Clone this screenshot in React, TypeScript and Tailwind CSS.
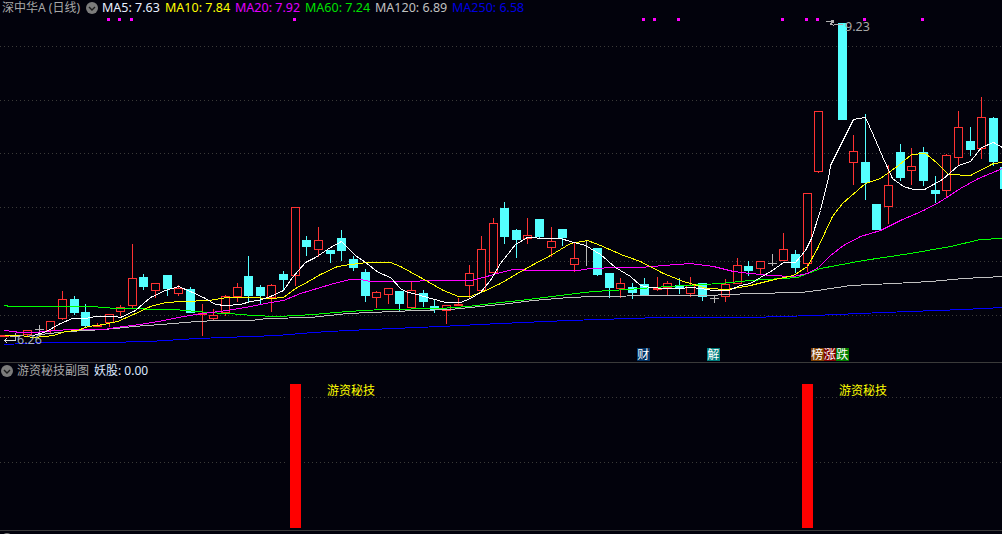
import React from 'react';

// left edge, wick top, body top, body bottom, wick bottom
type Candle = [number, number, number, number, number];

const redCandles: Candle[] = [
  [23, 330, 330, 335, 337], [46, 321, 321, 331, 333], [58, 291, 299, 319, 320], [93, 323, 325, 327, 327],
  [105, 314, 314, 323, 327], [116, 305, 307, 312, 316], [128, 244, 278, 306, 309], [151, 283, 283, 291, 298],
  [174, 285, 288, 294, 296], [198, 304, 313, 315, 336], [209, 309, 315, 319, 320], [221, 295, 296, 313, 316],
  [233, 283, 287, 297, 302], [267, 284, 285, 298, 312], [291, 207, 207, 276, 286], [314, 227, 240, 250, 257],
  [372, 291, 292, 298, 308], [384, 288, 288, 295, 304], [407, 281, 290, 308, 308], [442, 305, 305, 311, 324],
  [465, 265, 273, 286, 298], [477, 236, 249, 291, 293], [489, 218, 223, 273, 273], [523, 218, 235, 239, 244],
  [547, 227, 241, 248, 257], [570, 242, 258, 265, 272], [616, 278, 283, 289, 298], [653, 277, 288, 289, 291],
  [663, 281, 283, 288, 295], [686, 277, 285, 294, 297], [721, 279, 284, 297, 302], [733, 258, 265, 284, 284],
  [756, 261, 261, 269, 275], [779, 233, 249, 261, 261], [803, 193, 193, 264, 272], [814, 111, 111, 172, 173],
  [849, 135, 151, 163, 185], [884, 165, 185, 207, 224], [907, 148, 166, 171, 185], [942, 154, 155, 191, 198],
  [954, 111, 127, 158, 165], [977, 97, 117, 149, 159],
];

const cyanCandles: Candle[] = [
  [70, 296, 299, 313, 315], [81, 304, 312, 326, 328], [139, 274, 277, 287, 290], [163, 275, 275, 289, 296],
  [186, 287, 289, 313, 313], [244, 256, 276, 296, 302], [256, 285, 287, 296, 304], [279, 271, 274, 280, 290],
  [302, 236, 240, 247, 256], [326, 250, 250, 254, 263], [337, 230, 238, 251, 261], [349, 256, 259, 268, 271],
  [361, 269, 272, 296, 302], [395, 291, 291, 304, 311], [419, 290, 293, 302, 307], [430, 300, 306, 310, 313],
  [500, 202, 208, 237, 244], [512, 229, 230, 240, 258], [535, 219, 219, 237, 238], [558, 229, 229, 238, 246],
  [593, 248, 248, 275, 276], [605, 273, 273, 288, 298], [628, 283, 287, 293, 299], [640, 278, 284, 295, 295],
  [675, 278, 285, 288, 294], [698, 283, 283, 297, 301], [744, 261, 266, 271, 276], [791, 250, 254, 268, 273],
  [838, 23, 23, 120, 120], [861, 114, 162, 183, 200], [872, 204, 204, 230, 230], [896, 144, 152, 178, 181],
  [919, 147, 152, 181, 186], [931, 176, 190, 194, 203], [966, 127, 141, 150, 156], [989, 117, 118, 162, 166],
  [1000, 167, 167, 189, 189],
];

const maLines = [
  { color: '#0000ff', pts: '4,344 45,342 103,342 149,341 197,338 250,336 277,335 312,332 347,330 393,328 440,326 500,323 568,320 660,317 750,317 813,315 883,312 963,309 1002,307' },
  { color: '#c0c0c0', pts: '30,335 68,331 103,329 115,328 133,326 160,324 197,321 217,320 250,320 267,318 310,317 347,313 393,311 417,310 450,309 480,306 500,304 533,300 568,297 593,296 660,295 707,295 750,293 800,292 817,290 850,285 893,283 930,281 963,278 1002,276' },
  { color: '#00ff00', pts: '4,305 10,306 55,306 92,306 115,308 173,309 185,310 208,312 243,314 250,315 278,316 313,314 347,311 382,309 440,308 467,306 500,302 520,300 567,294 593,291 627,289 667,286 720,283 750,280 797,277 820,268 863,260 910,253 950,246 980,239 1002,238' },
  { color: '#ff00ff', pts: '4,330 20,332 33,332 45,331 68,329 103,329 123,326 140,324 163,320 183,316 203,313 227,310 250,306 270,302 283,300 300,293 320,287 337,282 350,279 360,279 370,281 393,281 407,281 433,280 470,280 483,277 500,272 513,269 533,270 557,270 577,270 590,268 617,267 640,267 663,265 690,263 713,266 733,271 750,273 770,275 793,276 807,273 818,267 830,255 843,245 860,236 880,230 900,220 923,210 940,201 960,188 978,178 1002,168' },
  { color: '#ffff00', pts: '4,335 20,335 33,337 45,336 53,335 65,331 77,330 88,326 103,324 117,321 133,314 150,306 165,302 183,301 208,300 227,297 250,297 270,298 283,297 295,288 308,281 320,274 337,266 350,264 367,262 390,262 400,266 420,277 443,290 458,296 470,296 483,291 500,283 517,273 533,264 550,255 570,243 587,240 600,245 623,255 640,261 663,273 683,281 707,288 727,289 750,285 770,280 793,275 807,266 817,248 832,216 842,203 865,183 880,178 898,165 911,154 925,153 936,162 948,174 970,175 993,163 1002,162' },
  { color: '#ffffff', pts: '33,335 46,331 60,323 72,318 85,318 95,316 115,316 120,317 135,310 150,297 165,290 178,286 190,291 205,298 215,304 225,305 240,304 250,301 258,300 270,296 283,290 292,277 305,262 315,257 330,247 341,241 355,255 365,262 378,272 390,277 400,288 405,291 420,295 445,302 460,302 470,298 480,292 490,280 500,263 515,244 527,237 545,238 560,238 570,241 585,245 600,254 615,267 630,276 640,285 650,287 665,288 680,288 690,287 700,288 713,290 728,290 740,285 750,283 760,277 772,270 783,262 795,262 805,250 811,238 820,210 828,178 830,165 842,141 853,119 865,117 873,135 882,156 892,178 903,186 913,189 924,189 942,179 958,165 970,161 981,147 993,142 1002,147' },
];

const gridLines = [46, 100, 153, 207, 261, 315];
const signalDots = [107, 118, 130, 293, 642, 653, 677, 781, 805, 816, 863, 921];

const legend = [
  { label: 'MA5: 7.63', cls: 'text-[#e8f0ff] w-[63px]' },
  { label: 'MA10: 7.84', cls: 'text-[#ffff00] w-[70px]' },
  { label: 'MA20: 7.92', cls: 'text-[#e000ff] w-[70px]' },
  { label: 'MA60: 7.24', cls: 'text-[#00e000] w-[70px]' },
  { label: 'MA120: 6.89', cls: 'text-[#c0c0c0] w-[77px]' },
  { label: 'MA250: 6.58', cls: 'text-[#0000e0] w-[80px]' },
];

const Chevron = () => (
  <svg width="12" height="12" viewBox="0 0 12 12" className="shrink-0 block">
    <circle cx="6" cy="6" r="6" fill="#7c7c7c" />
    <path d="M3 5 L6 8 L9 5" fill="none" stroke="#1c1c1c" strokeWidth="1.4" />
  </svg>
);

const CandleMark = ({ c, color, hollow }: { c: Candle; color: string; hollow: boolean }) => {
  const [x, high, top, bottom, low] = c;
  const mid = x + 4.5;
  return (
    <g>
      <line x1={mid} x2={mid} y1={high} y2={top} stroke={color} />
      <line x1={mid} x2={mid} y1={bottom} y2={low} stroke={color} />
      {hollow ? (
        <rect x={x + 0.5} y={top + 0.5} width={8} height={Math.max(bottom - top - 1, 1)} fill="#02020c" stroke={color} />
      ) : (
        <rect x={x} y={top} width={9} height={bottom - top} fill={color} />
      )}
    </g>
  );
};

const Tag = ({ text, cls }: { text: string; cls: string }) => (
  <span className={`w-[12.5px] h-[13px] leading-[13px] text-[12px] text-white text-center ${cls}`}>{text}</span>
);

const MainChart = () => (
  <svg width="1002" height="362" className="block" shapeRendering="crispEdges">
    {gridLines.map((y) => (
      <line key={y} x1="0" x2="1002" y1={y + 0.5} y2={y + 0.5} stroke="#3a3a38" strokeDasharray="1 3" />
    ))}
    {signalDots.map((x) => (
      <rect key={x} x={x} y="18" width="3" height="3" fill="#ff00ff" />
    ))}

    {/* flat or doji days at the far left and the gray crosses */}
    <rect x="0" y="335" width="9" height="2" fill="#ff3232" />
    <path d="M39.5 325V333M35 329.5H44M15.5 333V340M10 336.5H20M586.5 241V266M714.5 295V303M710 298.5H719M772.5 254V266M768 263.5H777" stroke="#b8b8b8" fill="none" />
    <rect x="454" y="304" width="9" height="2" fill="#ff3232" />
    <line x1="458.5" x2="458.5" y1="298" y2="304" stroke="#ff3232" />

    {cyanCandles.map((c) => <CandleMark key={c[0]} c={c} color="#54ffff" hollow={false} />)}
    {redCandles.map((c) => <CandleMark key={c[0]} c={c} color="#ff3232" hollow />)}

    <g transform="translate(0.5 0.5)">
      {maLines.map((m) => (
        <polyline key={m.color} points={m.pts} fill="none" stroke={m.color} strokeWidth="1" />
      ))}
    </g>

    {/* high and low markers */}
    <path d="M826 21.5H833M830.5 23L834 26M830.5 23V25M834 24L843 25" stroke="#b0b0b0" fill="none" />
    <rect x="831" y="20" width="3" height="3" fill="#b0b0b0" />
    <path d="M4 340.5H16M7 338L4.5 340.5L7 343" stroke="#e0e0e0" fill="none" />
  </svg>
);

const SubChart = () => (
  <svg width="1002" height="167" className="block" shapeRendering="crispEdges">
    {[34, 99].map((y) => (
      <line key={y} x1="0" x2="1002" y1={y + 0.5} y2={y + 0.5} stroke="#3a3a38" strokeDasharray="1 3" />
    ))}
    <rect x="288" y="21" width="15" height="146" fill="#02020c" />
    <rect x="800" y="21" width="15" height="146" fill="#02020c" />
    <rect x="290" y="21" width="11" height="144" fill="#ff0000" />
    <rect x="802" y="21" width="11" height="144" fill="#ff0000" />
  </svg>
);

export default function App() {
  return (
    <div className='w-[1002px] h-[534px] overflow-hidden bg-[#02020c] flex flex-col [font-family:"Noto_Sans","Noto_Sans_CJK_SC",sans-serif]'>
      {/* main candle panel */}
      <div className="relative h-[362px] shrink-0">
        <MainChart />
        <div className="absolute top-0 left-[2px] h-[16px] flex items-center text-[12.5px] leading-[16px] whitespace-nowrap">
          <span className="w-[84px] text-[12px] text-[#a8a8a8]">深中华A (日线)</span>
          <span className="w-[16px]"><Chevron /></span>
          {legend.map((l) => (
            <span key={l.label} className={l.cls}>{l.label}</span>
          ))}
        </div>
        <span className="absolute left-[845px] top-[19px] text-[12.5px] leading-[16px] text-[#a8a8a8]">9.23</span>
        <span className="absolute left-[17px] top-[332px] text-[12.5px] leading-[16px] text-[#a8b0c0]">6.26</span>
        <div className="absolute left-[637px] top-[348px] flex"><Tag text="财" cls="bg-[#003366]" /></div>
        <div className="absolute left-[707px] top-[348px] flex"><Tag text="解" cls="bg-[#008080]" /></div>
        <div className="absolute left-[811px] top-[348px] flex">
          <Tag text="榜" cls="bg-[#804000]" />
          <Tag text="涨" cls="bg-[#800000]" />
          <Tag text="跌" cls="bg-[#008000]" />
        </div>
      </div>

      {/* sub panel */}
      <div className="relative h-[168px] shrink-0 border-t border-[#3a3a3a]">
        <SubChart />
        <div className="absolute top-0 left-[1px] h-[16px] flex items-center whitespace-nowrap leading-[16px]">
          <Chevron />
          <span className="ml-[4px] text-[12px] text-[#a8a8a8]">游资秘技副图</span>
          <span className="ml-[5px] text-[12px] text-[#dce8ff]">妖股: 0.00</span>
        </div>
        <span className="absolute left-[327px] top-[20px] text-[12px] leading-[16px] text-[#ffff00]">游资秘技</span>
        <span className="absolute left-[839px] top-[20px] text-[12px] leading-[16px] text-[#ffff00]">游资秘技</span>
      </div>

      {/* next panel, only the top of its toggle is in view */}
      <div className="flex-1 border-t border-[#3a3a3a] pt-[2px] pl-[1px] overflow-hidden">
        <Chevron />
      </div>
    </div>
  );
}
